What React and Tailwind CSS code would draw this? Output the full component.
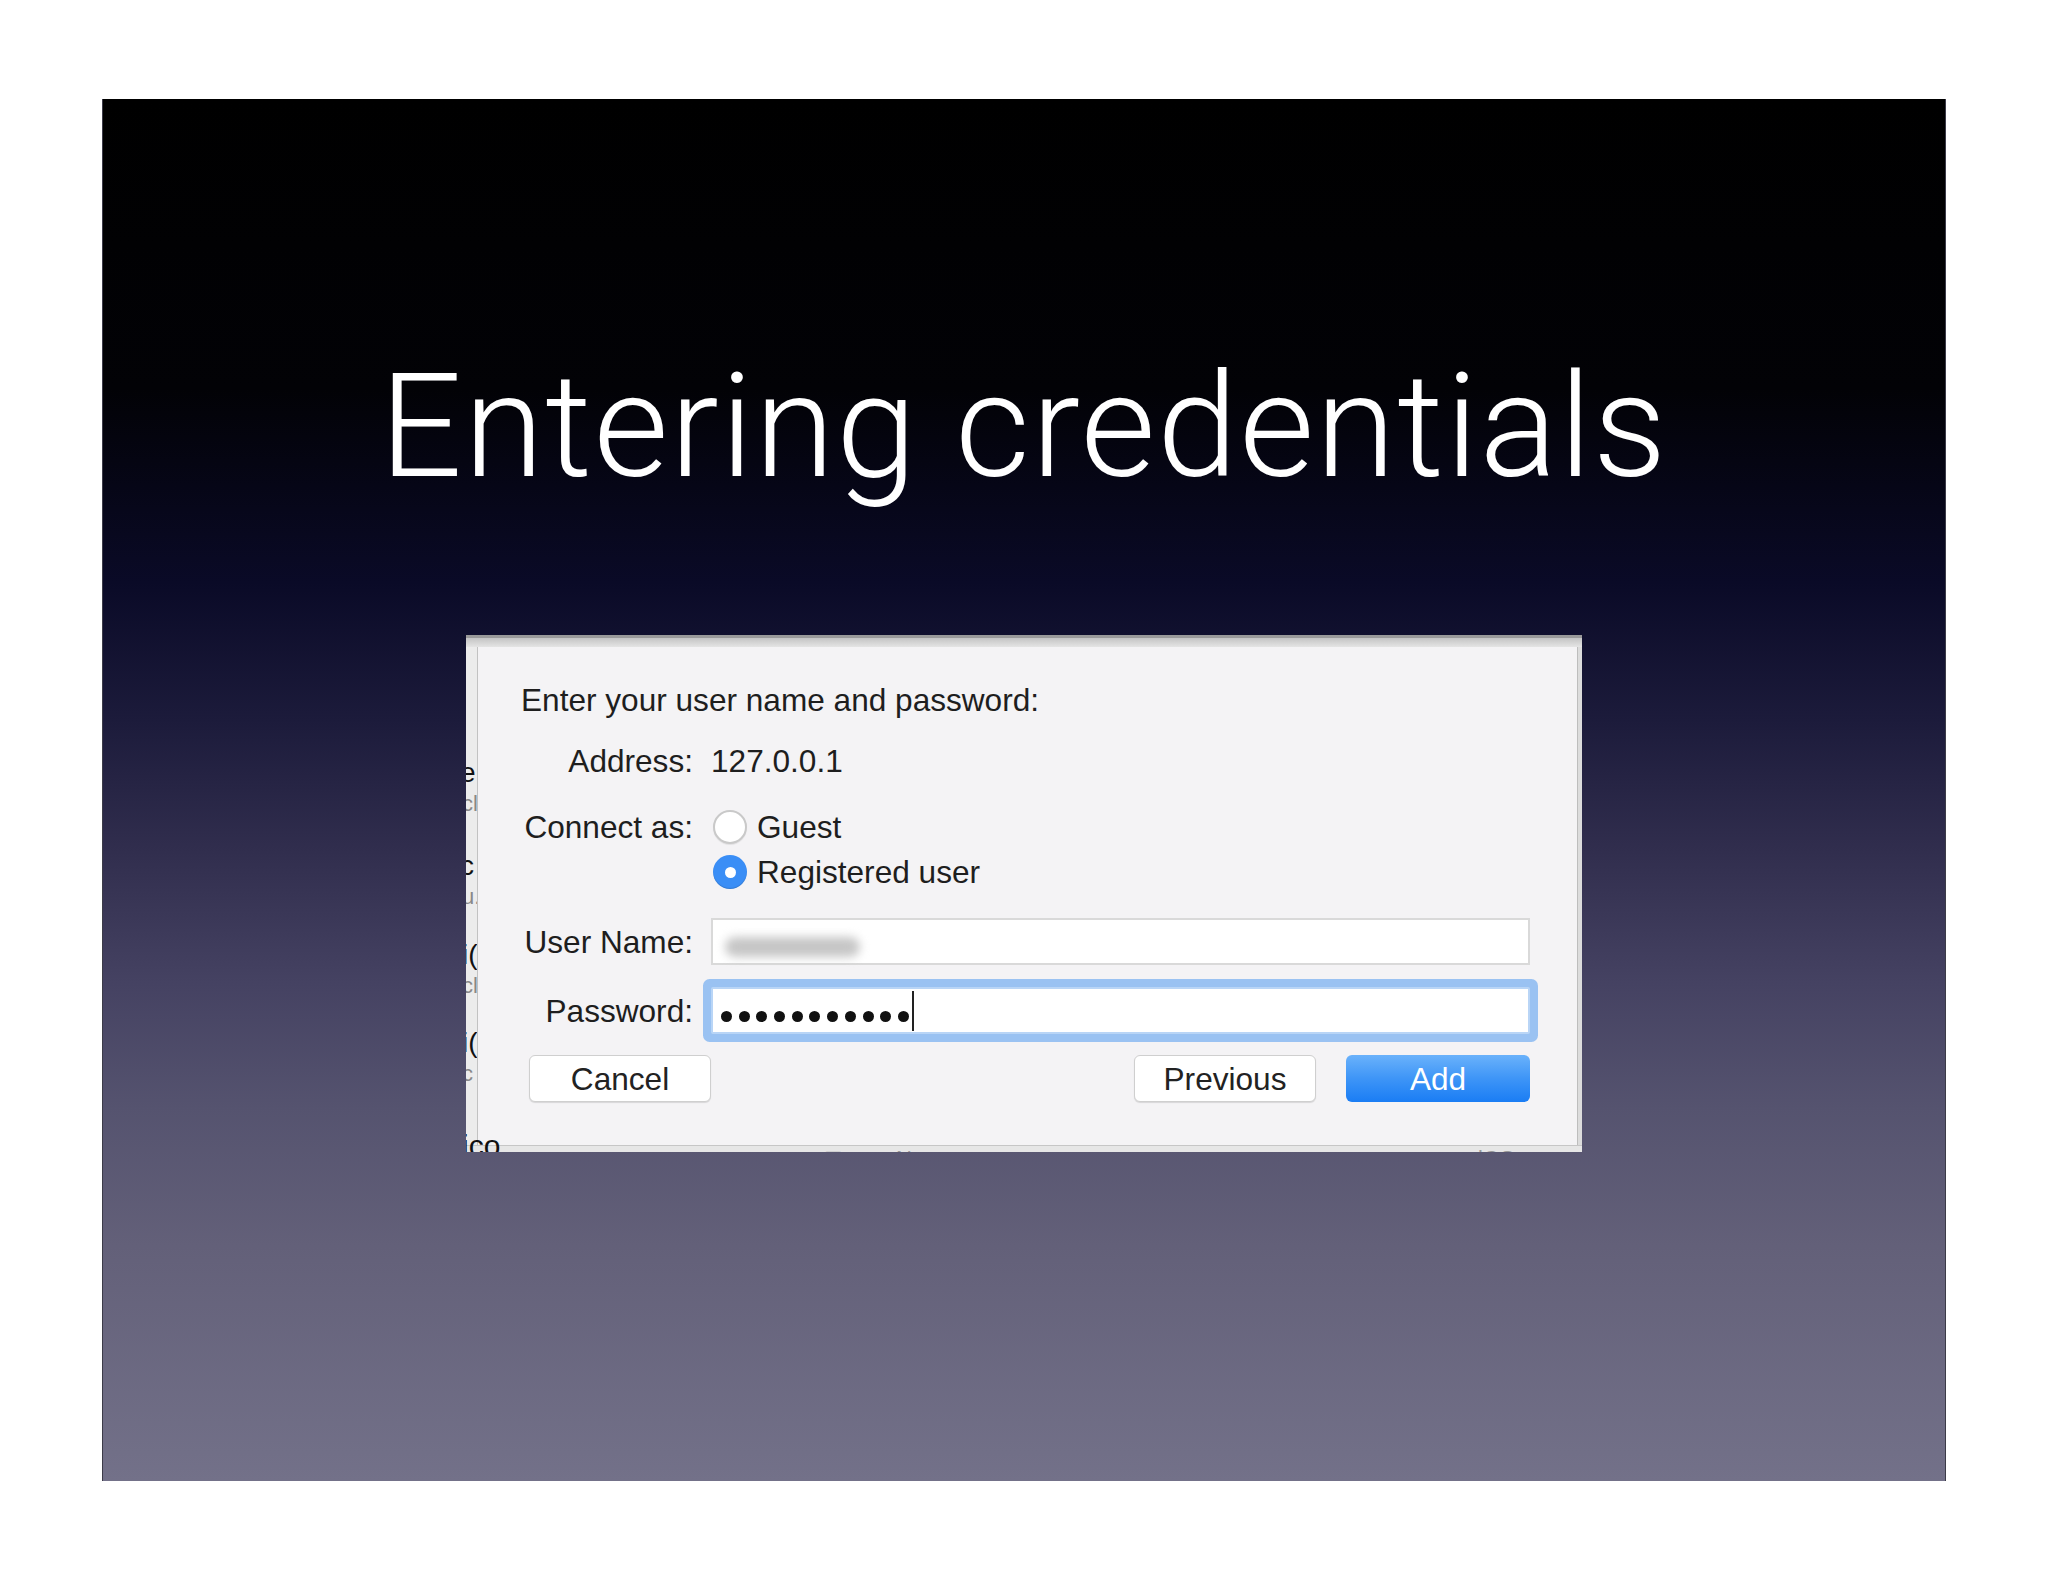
const Radio = ({ checked }) =>
  checked ? (
    <span className="flex h-[34px] w-[34px] shrink-0 items-center justify-center rounded-full bg-[#3a8ef6] shadow-[inset_0_-1px_1px_rgba(0,0,0,0.15)]">
      <span className="h-[11px] w-[11px] rounded-full bg-white" />
    </span>
  ) : (
    <span className="h-[34px] w-[34px] shrink-0 rounded-full border-2 border-[#c9c9c9] bg-white shadow-[0_1px_1px_rgba(0,0,0,0.08)]" />
  )

const Label = ({ children }) => (
  <div className="w-[215px] shrink-0 text-right">{children}</div>
)

const Button = ({ children, primary, className = '' }) => (
  <button
    className={
      primary
        ? `h-[47px] w-[184px] rounded-[6px] bg-[linear-gradient(180deg,#6ab2fb_0%,#3e95f7_50%,#1a7df4_100%)] text-white ${className}`
        : `h-[47px] w-[182px] rounded-[6px] border border-[#cfcfcf] bg-white text-[#222] shadow-[0_1px_1px_rgba(0,0,0,0.12)] ${className}`
    }
  >
    {children}
  </button>
)

export default function App() {
  return (
    <div className="flex h-[1582px] w-[2048px] justify-center bg-white pt-[99px]">
      {/* slide */}
      <div className="flex h-[1382px] w-[1844px] flex-col items-center border-x border-[#3c3b48] bg-[linear-gradient(180deg,#000_0%,#020206_21%,#0a0a27_35%,#1c1b3b_45%,#302d4d_54%,#454262_64%,#55536f_73%,#636079_83%,#737189_100%)] pt-[255px]">
        <h1 className="font-['Roboto','Liberation_Sans',sans-serif] text-[145px] font-light leading-[145px] tracking-[1.6px] text-white">
          Entering credentials
        </h1>

        {/* dialog screenshot */}
        <div className="relative mt-[136px] flex h-[517px] w-[1116px] flex-col overflow-hidden bg-[#f4f3f5] font-['Liberation_Sans',Arial,sans-serif] text-[31.6px] leading-[36px] text-[#1e1e1e]">
          <div className="h-[12px] shrink-0 border-t-[3px] border-[#9a9a9a] bg-[linear-gradient(180deg,#c4c4c4,#e4e4e4)]" />

          <div className="flex flex-1">
            {/* window behind, left edge */}
            <div className="flex w-[12px] shrink-0 flex-col overflow-hidden border-r border-[#c2c2c2] bg-[#ececec] pt-[110px] text-[28px] leading-[31px]">
              <span className="-ml-[6px] text-[#111]">e</span>
              <span className="-ml-[4px] text-[22px] text-[#888]">cl</span>
              <span className="-ml-[6px] mt-[31px] text-[#111]">c</span>
              <span className="-ml-[4px] text-[22px] text-[#888]">u.</span>
              <span className="-ml-[4px] mt-[27px] text-[#111]">i(</span>
              <span className="-ml-[4px] text-[22px] text-[#888]">cl</span>
              <span className="-ml-[4px] mt-[26px] text-[#111]">i(</span>
              <span className="-ml-[4px] text-[22px] text-[#888]">c</span>
            </div>

            {/* dialog body */}
            <div className="flex flex-1 flex-col pr-[47px] pt-[35px]">
              <div className="ml-[43px] h-[36px]">Enter your user name and password:</div>

              <div className="mt-[25px] flex h-[36px]">
                <Label>Address:</Label>
                <span className="ml-[18px]">127.0.0.1</span>
              </div>

              <div className="mt-[30px] flex h-[36px] items-center">
                <Label>Connect as:</Label>
                <span className="ml-[20px] flex items-center gap-[10px]">
                  <Radio />
                  Guest
                </span>
              </div>

              <div className="mt-[9px] flex h-[36px] items-center">
                <div className="w-[215px] shrink-0" />
                <span className="ml-[20px] flex items-center gap-[10px]">
                  <Radio checked />
                  Registered user
                </span>
              </div>

              <div className="mt-[28px] flex h-[47px] items-center">
                <Label>User Name:</Label>
                <div className="ml-[18px] flex h-[47px] flex-1 items-center border-2 border-[#d9d9d9] bg-white">
                  <div className="ml-[12px] mt-[10px] h-[20px] w-[135px] rounded-full bg-[#c6c6c6] blur-[5px]" />
                </div>
              </div>

              <div className="mt-[22px] flex h-[47px] items-center">
                <Label>Password:</Label>
                <div className="ml-[18px] flex h-[47px] flex-1 items-center rounded-[2px] border-2 border-[#b9d5f6] bg-white pl-[8px] shadow-[0_0_0_8px_#9ac2f2]">
                  <div className="mt-[12px] flex gap-[6.7px]">
                    {Array.from({ length: 11 }).map((_, i) => (
                      <span key={i} className="h-[11px] w-[11px] rounded-full bg-[#111]" />
                    ))}
                  </div>
                  <span className="ml-[3px] h-[40px] w-[2px] bg-[#222]" />
                </div>
              </div>

              <div className="mt-[21px] flex h-[47px]">
                <Button className="ml-[51px]">Cancel</Button>
                <div className="flex-1" />
                <Button>Previous</Button>
                <Button primary className="ml-[30px]">
                  Add
                </Button>
              </div>
            </div>

            {/* right edge */}
            <div className="w-[5px] shrink-0 border-l border-[#bdbdbd] bg-[#dcdcdc]" />
          </div>

          {/* bottom edge of the window behind */}
          <div className="relative h-[7px] shrink-0 overflow-hidden border-t border-[#c6c6c6] bg-[#e6e6e6] text-[22px] leading-[22px] text-[#999]">
            <span className="absolute left-[358px] top-[2px]">⊟</span>
            <span className="absolute left-[430px] top-[2px]">Name</span>
            <span className="absolute left-[1012px] top-[2px]">iOS</span>
          </div>

          <span className="absolute bottom-[-12px] left-[-4px] text-[30px] leading-[36px] text-[#111]">
            ico
          </span>
        </div>
      </div>
    </div>
  )
}
